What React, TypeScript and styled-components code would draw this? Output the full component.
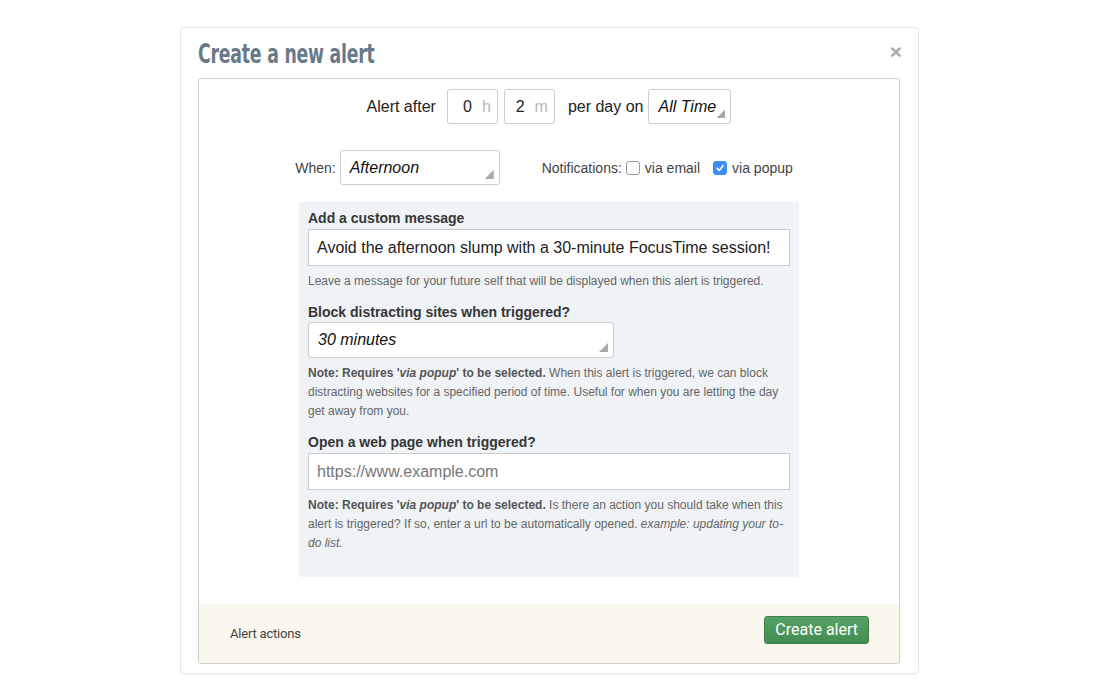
import React from "react";
import styled, { createGlobalStyle } from "styled-components";

const Global = createGlobalStyle`
  html, body { margin: 0; padding: 0; background: #ffffff; }
  body { font-family: "Liberation Sans", Arial, sans-serif; color: #333; }
  * { box-sizing: border-box; }
`;

const Page = styled.div`
  width: 1100px;
  height: 700px;
  padding: 27px 0 0 180px;
`;

const Modal = styled.div`
  width: 739px;
  height: 647px;
  border: 1px solid #e6e6e6;
  border-radius: 4px;
  padding: 0 18px 9px 17px;
  display: flex;
  flex-direction: column;
  box-shadow: 0 1px 2px rgba(0,0,0,0.04);
`;

const Header = styled.div`
  height: 50px;
  display: flex;
  align-items: center;
  justify-content: space-between;
  padding-top: 1px;
`;

const Title = styled.h1`
  margin: 0;
  font-family: "Liberation Sans Narrow", "DejaVu Sans Condensed", "Liberation Sans", sans-serif;
  font-weight: 700;
  font-size: 26px;
  color: #687a89;
  letter-spacing: -0.3px;
  display: inline-block;
  transform: scaleX(0.74);
  transform-origin: left center;
`;

const Close = styled.span`
  font-family: "Liberation Sans", Arial, sans-serif;
  font-weight: 700;
  font-size: 21px;
  color: #aaaaaa;
  margin-right: -2px;
  margin-top: -4px;
`;

const Panel = styled.div`
  flex: 1;
  border: 1px solid #cccccc;
  border-radius: 3px;
  display: flex;
  flex-direction: column;
  overflow: hidden;
`;

const Body = styled.div`
  flex: 1;
  padding: 10px 0 0;
  display: flex;
  flex-direction: column;
  align-items: center;
`;

const Row = styled.div<{ $gap?: number; $mt?: number; $pr?: number }>`
  display: flex;
  align-items: center;
  justify-content: center;
  gap: ${(p) => p.$gap ?? 6}px;
  margin-top: ${(p) => p.$mt ?? 0}px;
  padding-right: ${(p) => p.$pr ?? 0}px;
`;

const Text = styled.span<{ $size?: number; $color?: string; $ml?: number; $mr?: number }>`
  font-size: ${(p) => p.$size ?? 16}px;
  color: ${(p) => p.$color ?? "#222"};
  white-space: nowrap;
  margin-left: ${(p) => p.$ml ?? 0}px;
  margin-right: ${(p) => p.$mr ?? 0}px;
`;

const TimeBox = styled.div`
  width: 51px;
  height: 35px;
  border: 1px solid #cccccc;
  border-radius: 3px;
  display: flex;
  align-items: center;
  justify-content: flex-end;
  padding-right: 6px;
  gap: 10px;
  font-size: 16px;
  color: #222;
  background: #fff;
`;

const Unit = styled.span`
  color: #b8b8b8;
`;

const Select = styled.div<{ $w: number; $h?: number; $mt?: number }>`
  position: relative;
  width: ${(p) => p.$w}px;
  height: ${(p) => p.$h ?? 35}px;
  margin-top: ${(p) => p.$mt ?? 0}px;
  border: 1px solid #cccccc;
  border-radius: 3px;
  background: #fff;
  display: flex;
  align-items: flex-start;
  padding: 8px 9px 0;
  font-size: 16px;
  font-style: italic;
  color: #111;
  white-space: nowrap;
  &::after {
    content: "";
    position: absolute;
    right: 5px;
    bottom: 5px;
    width: 9px;
    height: 9px;
    background: #a9a9a9;
    clip-path: polygon(100% 0, 100% 100%, 0 100%);
  }
`;

const Check = styled.span<{ $on?: boolean }>`
  width: 14px;
  height: 14px;
  border-radius: 3px;
  border: 1px solid ${(p) => (p.$on ? "#3b8ef3" : "#9a9a9a")};
  background: ${(p) => (p.$on ? "#3b8ef3" : "#fff")};
  display: inline-flex;
  align-items: center;
  justify-content: center;
  margin: 0 5px 0 4px;
`;

const CheckLabel = styled.label<{ $ml?: number }>`
  display: inline-flex;
  align-items: center;
  font-size: 14px;
  color: #444;
  white-space: nowrap;
  margin-left: ${(p) => p.$ml ?? 0}px;
`;

const Card = styled.div`
  width: 500px;
  margin-top: 17px;
  background: #eff3f6;
  border-radius: 3px;
  padding: 8px 9px 24px;
  display: flex;
  flex-direction: column;
`;

const Label = styled.div<{ $mt?: number }>`
  font-size: 14px;
  font-weight: 700;
  color: #363636;
  margin-top: ${(p) => p.$mt ?? 0}px;
  line-height: 16px;
`;

const TextInput = styled.div<{ $placeholder?: boolean }>`
  margin-top: 3px;
  height: 37px;
  border: 1px solid #cccccc;
  background: #fff;
  display: flex;
  align-items: center;
  padding: 0 8px;
  font-size: 16px;
  color: ${(p) => (p.$placeholder ? "#777" : "#222")};
  white-space: nowrap;
`;

const Help = styled.p`
  margin: 6px 0 0;
  font-size: 12px;
  line-height: 19px;
  color: #666;
  b { color: #555; }
`;

const Footer = styled.div`
  height: 59px;
  background: #f9f7ee;
  display: flex;
  align-items: center;
  justify-content: space-between;
  padding: 0 30px 0 31px;
`;

const FooterText = styled.span`
  font-family: Roboto, "Liberation Sans", sans-serif;
  font-size: 13px;
  color: #444;
  letter-spacing: -0.2px;
`;

const Button = styled.button`
  height: 28px;
  padding: 0 10px;
  border: 1px solid #3d8149;
  border-radius: 3px;
  background: linear-gradient(#55a364, #428c52);
  color: #fff;
  font-family: Roboto, "Liberation Sans", sans-serif;
  font-size: 16px;
  margin-bottom: 8px;
`;

const CheckMark = () => (
  <svg width="10" height="10" viewBox="0 0 10 10">
    <path d="M2 5.2 L4.2 7.4 L8.2 2.6" stroke="#fff" strokeWidth="1.6" fill="none" strokeLinecap="round" strokeLinejoin="round" />
  </svg>
);

export default function App() {
  return (
    <Page>
      <Global />
      <Modal>
        <Header>
          <Title>Create a new alert</Title>
          <Close>×</Close>
        </Header>
        <Panel>
          <Body>
            <Row $gap={6}>
              <Text $size={16} $mr={5}>Alert after</Text>
              <TimeBox>0<Unit>h</Unit></TimeBox>
              <TimeBox>2<Unit>m</Unit></TimeBox>
              <Text $size={16} $ml={7} $mr={-1}>per day on</Text>
              <Select $w={83}>All Time</Select>
            </Row>
            <Row $gap={42} $mt={26} $pr={10}>
              <Row $gap={4}>
                <Text $size={14} $color="#444">When:</Text>
                <Select $w={160}>Afternoon</Select>
              </Row>
              <Row $gap={0}>
                <Text $size={14} $color="#444">Notifications:</Text>
                <CheckLabel><Check />via email</CheckLabel>
                <CheckLabel $ml={9}><Check $on><CheckMark /></Check>via popup</CheckLabel>
              </Row>
            </Row>
            <Card>
              <Label>Add a custom message</Label>
              <TextInput>Avoid the afternoon slump with a 30-minute FocusTime session!</TextInput>
              <Help>Leave a message for your future self that will be displayed when this alert is triggered.</Help>
              <Label $mt={13}>Block distracting sites when triggered?</Label>
              <Select $w={306} $h={36} $mt={2}>30 minutes</Select>
              <Help>
                <b>Note: Requires '<i>via popup</i>' to be selected.</b> When this alert is triggered, we can block distracting websites for a specified period of time. Useful for when you are letting the day get away from you.
              </Help>
              <Label $mt={13}>Open a web page when triggered?</Label>
              <TextInput $placeholder>https://www.example.com</TextInput>
              <Help>
                <b>Note: Requires '<i>via popup</i>' to be selected.</b> Is there an action you should take when this alert is triggered? If so, enter a url to be automatically opened. <i>example: updating your to-do list.</i>
              </Help>
            </Card>
          </Body>
          <Footer>
            <FooterText>Alert actions</FooterText>
            <Button>Create alert</Button>
          </Footer>
        </Panel>
      </Modal>
    </Page>
  );
}
